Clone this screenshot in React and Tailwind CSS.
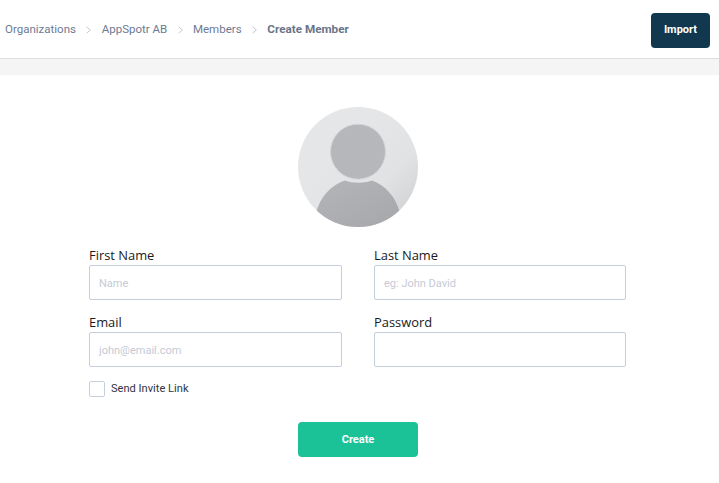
const crumbs = ['Organizations', 'AppSpotr AB', 'Members'];

function Chevron() {
  return (
    <svg width="5" height="8" viewBox="0 0 5 8" fill="none" className="mx-[10.4px] shrink-0">
      <path d="M0.6 0.8 L4.4 4 L0.6 7.2" stroke="#c3c9d6" strokeWidth="1" />
    </svg>
  );
}

function Avatar() {
  return (
    <svg width="120" height="120" viewBox="0 0 120 120">
      <defs>
        <linearGradient id="avatarBg" x1="0.35" y1="0.35" x2="1" y2="1">
          <stop offset="0" stopColor="#e5e6e8" />
          <stop offset="0.5" stopColor="#e1e2e4" />
          <stop offset="1" stopColor="#cbccce" />
        </linearGradient>
        <linearGradient id="avatarBody" x1="0" y1="0" x2="1" y2="1">
          <stop offset="0" stopColor="#b4b5b8" />
          <stop offset="1" stopColor="#a6a7aa" />
        </linearGradient>
        <clipPath id="avatarClip">
          <circle cx="60" cy="60" r="60" />
        </clipPath>
      </defs>
      <circle cx="60" cy="60" r="60" fill="url(#avatarBg)" />
      <circle cx="60" cy="44.7" r="27.5" fill="#b6b7ba" stroke="#d3d4d6" strokeWidth="1" />
      <g clipPath="url(#avatarClip)">
        <path
          d="M18 106 C22 90 33 78 47 73.5 C55 76.5 66 76.5 74 73.5 C87 78 98 90 102 106 L102 120 L18 120 Z"
          fill="url(#avatarBody)"
        />
      </g>
    </svg>
  );
}

function Field({ label, placeholder, type = 'text' }) {
  return (
    <div className="flex flex-col">
      <label className="font-['Open_Sans',sans-serif] text-[12.9px] leading-[19px] text-[#1a1a1a]">{label}</label>
      <input
        type={type}
        placeholder={placeholder}
        className="h-[35px] w-full rounded-[2px] border border-[#c3d0dc] bg-white px-[9px] pt-[2px] font-['Roboto',sans-serif] text-[11px] text-[#333] outline-none placeholder:text-[#c5cad6]"
      />
    </div>
  );
}

export default function App() {
  return (
    <div className="min-h-[483px] bg-white font-['Roboto',sans-serif]">
      <header className="flex h-[59px] items-center justify-between border-b border-[#dedede] pl-[5px] pr-[9px] pt-[2px]">
        <nav className="flex items-center text-[11.5px] text-[#6d7a94]">
          {crumbs.map((c) => (
            <span key={c} className="flex items-center">
              {c}
              <Chevron />
            </span>
          ))}
          <span className="text-[11.7px] font-bold text-[#6a7489]">Create Member</span>
        </nav>
        <button className="h-[35px] w-[59px] rounded-[4px] bg-[#12384f] text-[11px] font-bold text-white">Import</button>
      </header>
      <div className="h-4 bg-[#f5f5f5]" />
      <main className="flex flex-col pt-8">
        <div className="flex justify-center pr-[3px]">
          <Avatar />
        </div>
        <div className="mt-[19px] grid w-[626px] grid-cols-[253px_252px] gap-x-8 gap-y-[13px] pl-[89px]">
          <Field label="First Name" placeholder="Name" />
          <Field label="Last Name" placeholder="eg: John David" />
          <Field label="Email" placeholder="john@email.com" type="email" />
          <Field label="Password" type="password" />
        </div>
        <label className="mt-[13px] flex items-center pl-[89px]">
          <input type="checkbox" className="h-4 w-4 appearance-none rounded-[2px] border border-[#c3d0dc] bg-white" />
          <span className="ml-[6px] pt-[1px] text-[11.1px] text-[#2f3542]">Send Invite Link</span>
        </label>
        <div className="mt-[24px] flex justify-center pr-[3px]">
          <button className="h-[35px] w-[120px] rounded-[4px] bg-[#1bc298] pt-[2px] text-[11px] font-bold text-white">Create</button>
        </div>
      </main>
    </div>
  );
}
